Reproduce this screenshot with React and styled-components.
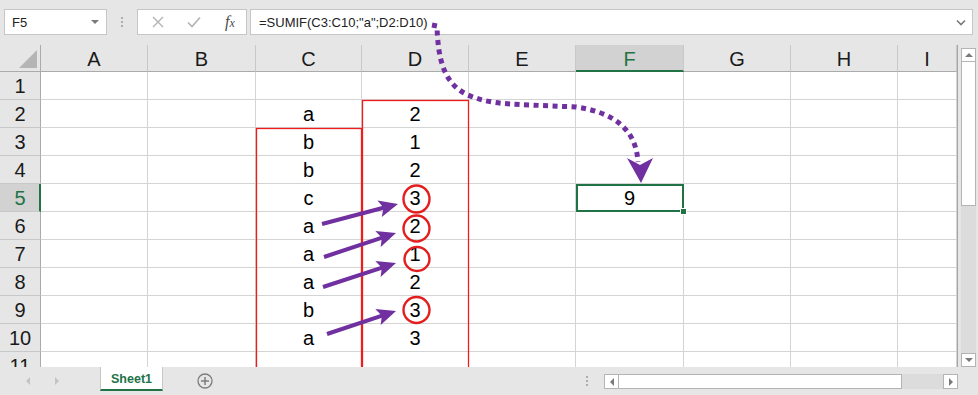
import React from 'react';
import styled, { createGlobalStyle } from 'styled-components';

const GlobalStyle = createGlobalStyle`
  html, body { margin: 0; padding: 0; background: #e6e6e6; }
  body { font-family: "Liberation Sans", Arial, sans-serif; }
`;

const GREEN = '#217346';
const PURPLE = '#7030a0';

const Window = styled.div`
  position: relative;
  width: 978px;
  height: 395px;
  background: #e6e6e6;
  display: flex;
  flex-direction: column;
  overflow: hidden;
`;

const FormulaRow = styled.div`
  height: 45px;
  box-sizing: border-box;
  padding: 9px 5px 0 4px;
  display: flex;
  align-items: flex-start;
`;

const Field = styled.div`
  box-sizing: border-box;
  height: 26px;
  background: #fff;
  border: 1px solid #c6c6c6;
  display: flex;
  align-items: center;
  font-size: 13px;
  color: #222;
`;

const NameBox = styled(Field)`
  width: 103px;
  justify-content: space-between;
  padding: 0 7px 0 7px;
`;

const Grip = styled.div`
  width: 30px;
  height: 26px;
  display: flex;
  flex-direction: column;
  align-items: center;
  justify-content: center;
  gap: 2px;
  flex-shrink: 0;
`;

const GripDot = styled.span`
  width: 2px;
  height: 2px;
  background: #adadad;
`;

const FxBox = styled(Field)`
  width: 110px;
  padding-left: 2px;
  display: grid;
  grid-template-columns: 36px 36px 36px;
  align-items: center;
  justify-items: center;
`;

const FxLabel = styled.span`
  font-family: "Liberation Serif", "Times New Roman", serif;
  font-style: italic;
  color: #4a4a4a;
  font-size: 16px;
  line-height: 1;
  & > small { font-size: 12px; }
`;

const FormulaInput = styled(Field)`
  flex: 1;
  margin-left: 3px;
  padding: 0 6px 0 8px;
  justify-content: space-between;
  white-space: pre;
`;

const Main = styled.div`
  display: flex;
  height: 322px;
`;

const Sheet = styled.div`
  width: 958px;
  box-sizing: border-box;
  border-right: 1px solid #a6a6a6;
  background: #fff;
  display: grid;
  grid-template-columns: 41px 107px 108px 106px 107px 107px 108px 107px 107px 59px;
  grid-template-rows: 27px;
  grid-auto-rows: 28px;
  overflow: hidden;
  font-size: 20px;
`;

const Corner = styled.div`
  box-sizing: border-box;
  background: #e6e6e6;
  border-right: 1px solid #ababab;
  border-bottom: 1px solid #ababab;
  display: flex;
  align-items: flex-end;
  justify-content: flex-end;
  padding: 0 3px 3px 0;
`;

const ColHeader = styled.div`
  box-sizing: border-box;
  background: ${p => (p.$active ? '#d2d2d2' : '#e6e6e6')};
  color: ${p => (p.$active ? GREEN : '#1a1a1a')};
  border-right: 1px solid #c8c8c8;
  border-bottom: ${p => (p.$active ? `2px solid ${GREEN}` : '1px solid #ababab')};
  display: flex;
  align-items: center;
  justify-content: center;
  padding-top: ${p => (p.$active ? '3px' : '2px')};
`;

const RowHeader = styled.div`
  box-sizing: border-box;
  background: ${p => (p.$active ? '#d2d2d2' : '#e6e6e6')};
  color: ${p => (p.$active ? GREEN : '#1a1a1a')};
  border-right: ${p => (p.$active ? `2px solid ${GREEN}` : '1px solid #ababab')};
  border-bottom: 1px solid #c8c8c8;
  display: flex;
  align-items: center;
  justify-content: center;
  padding-top: 2px;
  padding-left: ${p => (p.$active ? '1px' : '0')};
`;

const Cell = styled.div`
  position: relative;
  box-sizing: border-box;
  background: #fff;
  color: #000;
  border-right: 1px solid ${p => (p.$selected ? GREEN : '#d4d4d4')};
  border-bottom: 1px solid ${p => (p.$selected ? GREEN : '#d4d4d4')};
  box-shadow: ${p =>
    p.$selected ? `inset 2px 2px 0 ${GREEN}, inset -1px -1px 0 ${GREEN}` : 'none'};
  z-index: ${p => (p.$selected ? 2 : 'auto')};
  display: flex;
  align-items: center;
  justify-content: center;
  padding-top: 2px;
`;

const FillHandle = styled.span`
  position: absolute;
  right: -4px;
  bottom: -4px;
  width: 5px;
  height: 5px;
  background: ${GREEN};
  border: 1px solid #fff;
`;

const VScroll = styled.div`
  width: 15px;
  margin: 3px 0 0 3px;
  height: 319px;
  display: flex;
  flex-direction: column;
`;

const ScrollBtn = styled.div`
  box-sizing: border-box;
  width: 15px;
  height: ${p => p.$h || 15}px;
  background: #fff;
  border: 1px solid #b4b4b4;
  display: flex;
  align-items: center;
  justify-content: center;
  flex-shrink: 0;
`;

const VThumb = styled.div`
  box-sizing: border-box;
  height: 144px;
  background: #fff;
  border: 1px solid #b4b4b4;
  border-top: none;
`;

const Track = styled.div`
  flex: 1;
  background: #dcdcdc;
`;

const BottomBar = styled.div`
  height: 28px;
  display: flex;
  align-items: flex-start;
`;

const NavGroup = styled.div`
  width: 100px;
  height: 28px;
  box-sizing: border-box;
  padding-left: 26px;
  display: flex;
  align-items: center;
  gap: 25px;
`;

const SheetTab = styled.div`
  box-sizing: border-box;
  width: 63px;
  height: 24px;
  background: #fff;
  border-left: 1px solid #c6c6c6;
  border-right: 1px solid #c6c6c6;
  border-bottom: 2px solid ${GREEN};
  color: ${GREEN};
  font-weight: bold;
  font-size: 12.5px;
  display: flex;
  align-items: center;
  justify-content: center;
  padding-top: 2px;
`;

const AddSheet = styled.div`
  margin: 6px 0 0 34px;
  width: 16px;
  height: 16px;
  display: flex;
`;

const Spacer = styled.div`
  flex: 1;
`;

const HGrip = styled(Grip)`
  width: 34px;
  height: 28px;
`;

const HScroll = styled.div`
  margin: 7px 20px 0 0;
  width: 354px;
  height: 15px;
  display: flex;
`;

const HThumb = styled.div`
  box-sizing: border-box;
  width: 283px;
  height: 15px;
  background: #fff;
  border: 1px solid #b4b4b4;
  border-left: none;
`;

const Overlay = styled.svg`
  position: absolute;
  left: 0;
  top: 0;
  pointer-events: none;
  z-index: 10;
`;

const columns = ['A', 'B', 'C', 'D', 'E', 'F', 'G', 'H', 'I'];
const data = {
  C2: 'a', D2: '2',
  C3: 'b', D3: '1',
  C4: 'b', D4: '2',
  C5: 'c', D5: '3',
  C6: 'a', D6: '2',
  C7: 'a', D7: '1',
  C8: 'a', D8: '2',
  C9: 'b', D9: '3',
  C10: 'a', D10: '3',
  F5: '9',
};

function Arrow({ x1, y1, x2, y2 }) {
  const dx = x2 - x1;
  const dy = y2 - y1;
  const len = Math.hypot(dx, dy);
  const ux = dx / len;
  const uy = dy / len;
  const nx = -uy;
  const ny = ux;
  const hl = 19;
  const hw = 8.5;
  const bx = x2 - ux * hl;
  const by = y2 - uy * hl;
  const notchX = x2 - ux * (hl - 4);
  const notchY = y2 - uy * (hl - 4);
  const pts = [
    [x2, y2],
    [bx + nx * hw, by + ny * hw],
    [notchX, notchY],
    [bx - nx * hw, by - ny * hw],
  ]
    .map(p => p.map(v => v.toFixed(1)).join(','))
    .join(' ');
  return (
    <g>
      <line x1={x1} y1={y1} x2={notchX + ux * 2} y2={notchY + uy * 2} stroke={PURPLE} strokeWidth="4" />
      <polygon points={pts} fill={PURPLE} />
    </g>
  );
}

const Tri = ({ dir, color = '#6d6d6d', size = 4 }) => {
  const s = size;
  const paths = {
    up: `M0 ${s} L${s} 0 L${2 * s} ${s} Z`,
    down: `M0 0 L${2 * s} 0 L${s} ${s} Z`,
    left: `M${s} 0 L${s} ${2 * s} L0 ${s} Z`,
    right: `M0 0 L0 ${2 * s} L${s} ${s} Z`,
  };
  const vertical = dir === 'up' || dir === 'down';
  return (
    <svg width={vertical ? 2 * s : s} height={vertical ? s : 2 * s} style={{ display: 'block' }}>
      <path d={paths[dir]} fill={color} />
    </svg>
  );
};

export default function App() {
  const rows = Array.from({ length: 11 }, (_, i) => i + 1);
  return (
    <>
      <GlobalStyle />
      <Window>
        <FormulaRow>
          <NameBox>
            <span>F5</span>
            <Tri dir="down" size={4} color="#7a7a7a" />
          </NameBox>
          <Grip>
            <GripDot />
            <GripDot />
            <GripDot />
          </Grip>
          <FxBox>
            <svg width="12" height="12" viewBox="0 0 12 12">
              <path d="M1 1 L11 11 M11 1 L1 11" stroke="#b3b3b3" strokeWidth="1.4" fill="none" />
            </svg>
            <svg width="14" height="12" viewBox="0 0 14 12">
              <path d="M1 6.5 L5 10.5 L13 1.5" stroke="#b3b3b3" strokeWidth="1.6" fill="none" />
            </svg>
            <FxLabel>
              f<small>x</small>
            </FxLabel>
          </FxBox>
          <FormulaInput>
            <span>=SUMIF(C3:C10;"a";D2:D10)</span>
            <svg width="10" height="7" viewBox="0 0 10 7">
              <path d="M1 1.5 L5 5.5 L9 1.5" stroke="#7a7a7a" strokeWidth="1.6" fill="none" />
            </svg>
          </FormulaInput>
        </FormulaRow>

        <Main>
          <Sheet>
            <Corner>
              <svg width="18" height="18" viewBox="0 0 18 18">
                <path d="M18 0 L18 18 L0 18 Z" fill="#b5b5b5" />
              </svg>
            </Corner>
            {columns.map(c => (
              <ColHeader key={c} $active={c === 'F'}>
                {c}
              </ColHeader>
            ))}
            {rows.map(r => (
              <React.Fragment key={r}>
                <RowHeader $active={r === 5}>{r}</RowHeader>
                {columns.map(c => {
                  const id = `${c}${r}`;
                  const selected = id === 'F5';
                  return (
                    <Cell key={id} $selected={selected}>
                      {data[id] || ''}
                      {selected && <FillHandle />}
                    </Cell>
                  );
                })}
              </React.Fragment>
            ))}
          </Sheet>
          <VScroll>
            <ScrollBtn $h={14}>
              <Tri dir="up" size={4} color="#7a7a7a" />
            </ScrollBtn>
            <VThumb />
            <Track />
            <ScrollBtn $h={14}>
              <Tri dir="down" size={4} color="#7a7a7a" />
            </ScrollBtn>
          </VScroll>
        </Main>

        <BottomBar>
          <NavGroup>
            <Tri dir="left" size={4} color="#c3c3c3" />
            <Tri dir="right" size={4} color="#c3c3c3" />
          </NavGroup>
          <SheetTab>Sheet1</SheetTab>
          <AddSheet>
            <svg width="16" height="16" viewBox="0 0 16 16">
              <circle cx="8" cy="8" r="7" stroke="#7d7d7d" strokeWidth="1.3" fill="none" />
              <path d="M8 4 L8 12 M4 8 L12 8" stroke="#7d7d7d" strokeWidth="1.5" />
            </svg>
          </AddSheet>
          <Spacer />
          <HGrip>
            <GripDot />
            <GripDot />
            <GripDot />
          </HGrip>
          <HScroll>
            <ScrollBtn>
              <Tri dir="left" size={4} color="#7a7a7a" />
            </ScrollBtn>
            <HThumb />
            <Track />
            <ScrollBtn>
              <Tri dir="right" size={4} color="#7a7a7a" />
            </ScrollBtn>
          </HScroll>
        </BottomBar>

        <Overlay width="978" height="395" viewBox="0 0 978 395">
          <defs>
            <clipPath id="gridClip">
              <rect x="41" y="72" width="916" height="295" />
            </clipPath>
          </defs>
          <g clipPath="url(#gridClip)" fill="none" stroke="#f01c1c" strokeWidth="1.3">
            <rect x="256.5" y="128.5" width="105" height="260" />
            <rect x="362.5" y="100.5" width="106" height="290" />
          </g>
          <g fill="none" stroke="#e31e1e" strokeWidth="2.4">
            <ellipse cx="416.5" cy="199" rx="13" ry="13.5" />
            <ellipse cx="416.5" cy="228.5" rx="13" ry="13" />
            <ellipse cx="417" cy="259" rx="12.5" ry="12" />
            <ellipse cx="416.5" cy="310" rx="13" ry="13" />
          </g>
          <Arrow x1={322} y1={224} x2={398} y2={204} />
          <Arrow x1={324} y1={257} x2={396} y2={233} />
          <Arrow x1={323} y1={287} x2={396} y2={263} />
          <Arrow x1={327} y1={334} x2={396} y2={311} />
          <path
            d="M432 25 L437 26 C438 60 444 84 468 95 C484 102 500 104 530 105 L576 107 C612 112 636 128 638 162"
            fill="none"
            stroke={PURPLE}
            strokeWidth="5"
            strokeDasharray="5 4.5"
          />
          <polygon points="627,158 640,165 653,158 641,183" fill={PURPLE} />
        </Overlay>
      </Window>
    </>
  );
}
